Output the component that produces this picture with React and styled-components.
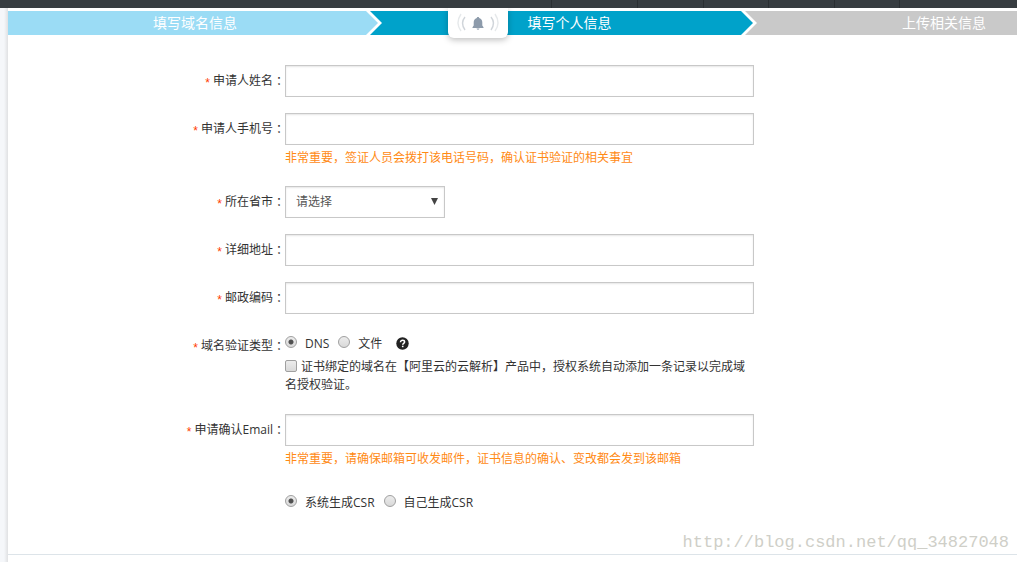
import React from "react";
import styled, { createGlobalStyle } from "styled-components";

const GlobalStyle = createGlobalStyle`
  * { box-sizing: border-box; }
  html, body { height: 100%; }
  #root { min-height: 100%; display: flex; flex-direction: column; }
  body {
    margin: 0;
    overflow: hidden;
    background: #fff;
    color: #333;
    font: 12px/18px "Open Sans", "Noto Sans CJK SC", sans-serif;
  }
  input, select, button { font: inherit; color: inherit; margin: 0; }
`;

const TopBar = styled.header`
  display: flex;
  justify-content: flex-end;
  height: 8px;
  background: #373d41;
`;

const TopCell = styled.span`
  width: ${(p) => p.$width}px;
  border-left: 1px solid #2a2f32;
`;

const Page = styled.div`
  position: relative;
  flex: 1;
  display: grid;
  grid-template-columns: 8px minmax(0, 1fr);
  min-height: 554px;
`;

const Gutter = styled.aside`
  background: linear-gradient(to right, #f5f7fa 0, #f5f7fa 4px, #e0e1e3 8px);
`;

const Main = styled.main`
  padding-top: 3px;
  background: #fff;
`;

const Steps = styled.ol`
  display: flex;
  margin: 0;
  padding: 0;
  list-style: none;
  overflow: hidden;
`;

const Step = styled.li`
  position: relative;
  flex: 0 0 ${(p) => p.$width}px;
  height: 24px;
  line-height: 24px;
  font-size: 14px;
  text-align: center;
  color: #fff;
  background: ${(p) => p.$color};
`;

const StepArrow = styled.svg`
  position: absolute;
  top: 0;
  right: 0;
`;

const BellButton = styled.button`
  position: absolute;
  top: 0;
  left: 47%;
  width: 60px;
  height: 30px;
  margin-left: -30px;
  padding: 0;
  border: 0;
  border-radius: 0 0 6px 6px;
  background: #fff;
  box-shadow: 0 2px 6px rgba(0, 0, 0, 0.25);
  clip-path: inset(0 -10px -12px -10px);
  svg { display: block; }
`;

const Form = styled.form`
  display: flex;
  flex-direction: column;
  gap: 16px;
  padding: 30px 0 35px;
  border-bottom: 1px solid #dde4e9;
`;

const Row = styled.div`
  display: grid;
  grid-template-columns: 277px minmax(0, 469px);
  margin: 0;
`;

const Label = styled.label`
  display: block;
  height: 32px;
  line-height: 32px;
  text-align: right;
`;

const Star = styled.span`
  margin-right: 3px;
  font-family: "Liberation Sans", sans-serif;
  line-height: 12px;
  vertical-align: -2px;
  color: #ff3c00;
`;

const Colon = styled.span`
  font-family: "Noto Sans CJK TC", sans-serif;
  line-height: 12px;
  vertical-align: -1px;
`;

const TextInput = styled.input`
  display: block;
  width: 100%;
  height: 32px;
  padding: 0 10px;
  border: 1px solid #c8c8c8;
  border-radius: 0;
  background: #fff;
  box-shadow: inset 0 1px 2px rgba(0, 0, 0, 0.1);
  outline: 0;
`;

const Hint = styled.p`
  margin: 0;
  line-height: 25px;
  color: #ff8a15;
`;

const SelectBox = styled.div`
  position: relative;
  width: 160px;
`;

const Select = styled.select`
  appearance: none;
  display: block;
  width: 100%;
  height: 32px;
  padding: 0 10px;
  border: 1px solid #c8c8c8;
  border-radius: 0;
  background: #fff;
  box-shadow: inset 0 1px 2px rgba(0, 0, 0, 0.1);
  color: #555;
`;

const SelectArrow = styled.svg`
  position: absolute;
  top: 12px;
  right: 7px;
  pointer-events: none;
`;

const Options = styled.div`
  display: flex;
  align-items: center;
  gap: 9px;
  height: ${(p) => p.$height}px;
`;

const Option = styled.label`
  display: flex;
  align-items: center;
  gap: 8px;
`;

const Radio = styled.input`
  appearance: none;
  width: 12px;
  height: 12px;
  margin-bottom: 4px;
  border: 1px solid #a0a0a0;
  border-radius: 50%;
  background: linear-gradient(#ececec, #d9d9d9);
  &:checked {
    background: radial-gradient(circle, #505050 0 2px, transparent 3px),
      linear-gradient(#ececec, #d9d9d9);
  }
`;

const Checkbox = styled.input`
  appearance: none;
  width: 12px;
  height: 12px;
  margin-right: 4px;
  vertical-align: -1px;
  border: 1px solid #a0a0a0;
  border-radius: 2px;
  background: linear-gradient(#ececec, #d9d9d9);
`;

const HelpButton = styled.button`
  width: 13px;
  height: 13px;
  margin: 0 0 2px 5px;
  padding: 0;
  border: 0;
  background: none;
  svg { display: block; }
`;

const Agreement = styled.label`
  display: block;
  padding-bottom: 4px;
`;

const Watermark = styled.div`
  position: absolute;
  right: 8px;
  bottom: 9px;
  font: 17px/20px "Liberation Mono", monospace;
  color: #cfcfc8;
`;

const topCells = [86, 66, 65, 66, 65, 118];

const steps = [
  { text: "填写域名信息", color: "#9bdcf5", width: 374, next: "#00a2ca" },
  { text: "填写个人信息", color: "#00a2ca", width: 375, next: "#c9c9c9" },
  { text: "上传相关信息", color: "#c9c9c9", width: 374 },
];

function FieldLabel({ htmlFor, id, children, as }) {
  return (
    <Label as={as} htmlFor={htmlFor} id={id}>
      <Star>*</Star>
      {children}
      <Colon>：</Colon>
    </Label>
  );
}

function TextField({ id, label, hint }) {
  return (
    <Row>
      <FieldLabel htmlFor={id}>{label}</FieldLabel>
      <div>
        <TextInput id={id} type="text" />
        {hint && <Hint>{hint}</Hint>}
      </div>
    </Row>
  );
}

function RadioOption({ name, value, checked, children }) {
  return (
    <Option>
      <Radio type="radio" name={name} value={value} defaultChecked={checked} />
      {children}
    </Option>
  );
}

function Bell() {
  return (
    <svg width="60" height="30" viewBox="0 0 60 30" fill="none">
      <path
        d="M30 9c-.8 0-1.2.5-1.2 1.1-2.2.7-3.1 2.4-3.1 4.5v3L24.500 19.200v.8h11v-.8l-1.200-1.600v-3c0-2.100-.9-3.800-3.100-4.500C31.200 9.500 30.800 9 30 9z"
        fill="#8d9bab"
      />
      <path d="M28.500 20.500h3c-.2.8-.8 1.200-1.500 1.200s-1.300-.4-1.500-1.200z" fill="#8d9bab" />
      <path d="M17 9q-5 6 0 13M43 9q5 6 0 13" stroke="#d0d5da" strokeWidth="1.400" />
      <path d="M13 6q-6 9 0 17M47 6q6 9 0 17" stroke="#e6e9eb" strokeWidth="1.400" />
    </svg>
  );
}

export default function App() {
  return (
    <>
      <GlobalStyle />
      <TopBar>
        {topCells.map((w, i) => (
          <TopCell key={i} $width={w} />
        ))}
      </TopBar>
      <Page>
        <Gutter />
        <Main>
          <Steps>
            {steps.map((s) => (
              <Step key={s.text} $color={s.color} $width={s.width}>
                {s.text}
                {s.next && (
                  <StepArrow width="16" height="24" viewBox="0 0 16 24">
                    <path d="M0 0h16v24H0z" fill={s.next} />
                    <path d="M0 0h4l12 12L4 24H0z" fill="#fff" />
                    <path d="M0 0l12 12L0 24z" fill={s.color} />
                  </StepArrow>
                )}
              </Step>
            ))}
          </Steps>
          <Form>
            <TextField id="name" label="申请人姓名" />
            <TextField
              id="phone"
              label="申请人手机号"
              hint="非常重要，签证人员会拨打该电话号码，确认证书验证的相关事宜"
            />
            <Row>
              <FieldLabel htmlFor="region">所在省市</FieldLabel>
              <SelectBox>
                <Select id="region">
                  <option>请选择</option>
                </Select>
                <SelectArrow width="7" height="7" viewBox="0 0 7 7">
                  <path d="M0 0h7L3.500 7z" fill="#444" />
                </SelectArrow>
              </SelectBox>
            </Row>
            <TextField id="address" label="详细地址" />
            <TextField id="postcode" label="邮政编码" />
            <Row role="radiogroup" aria-labelledby="verify-label">
              <FieldLabel as="span" id="verify-label">域名验证类型</FieldLabel>
              <div>
                <Options $height={28}>
                  <RadioOption name="verify" value="dns" checked>DNS</RadioOption>
                  <RadioOption name="verify" value="file">文件</RadioOption>
                  <HelpButton type="button" aria-label="帮助">
                    <svg width="13" height="13" viewBox="0 0 13 13" fill="none">
                      <circle cx="6.500" cy="6.500" r="6.200" fill="#222" />
                      <path
                        d="M4.500 5.200c0-1.300.9-2 2.100-2s2 .7 2 1.700c0 1.400-1.900 1.400-1.900 2.800"
                        stroke="#fff"
                        strokeWidth="1.500"
                      />
                      <path d="M5.900 8.700h1.600v1.500H5.900z" fill="#fff" />
                    </svg>
                  </HelpButton>
                </Options>
                <Agreement>
                  <Checkbox type="checkbox" />
                  证书绑定的域名在【阿里云的云解析】产品中，授权系统自动添加一条记录以完成域名授权验证。
                </Agreement>
              </div>
            </Row>
            <TextField
              id="email"
              label="申请确认Email"
              hint="非常重要，请确保邮箱可收发邮件，证书信息的确认、变改都会发到该邮箱"
            />
            <Row role="radiogroup" aria-label="CSR">
              <span />
              <Options $height={32}>
                <RadioOption name="csr" value="system" checked>系统生成CSR</RadioOption>
                <RadioOption name="csr" value="self">自己生成CSR</RadioOption>
              </Options>
            </Row>
          </Form>
        </Main>
        <BellButton type="button" aria-label="通知">
          <Bell />
        </BellButton>
        <Watermark>http://blog.csdn.net/qq_34827048</Watermark>
      </Page>
    </>
  );
}
